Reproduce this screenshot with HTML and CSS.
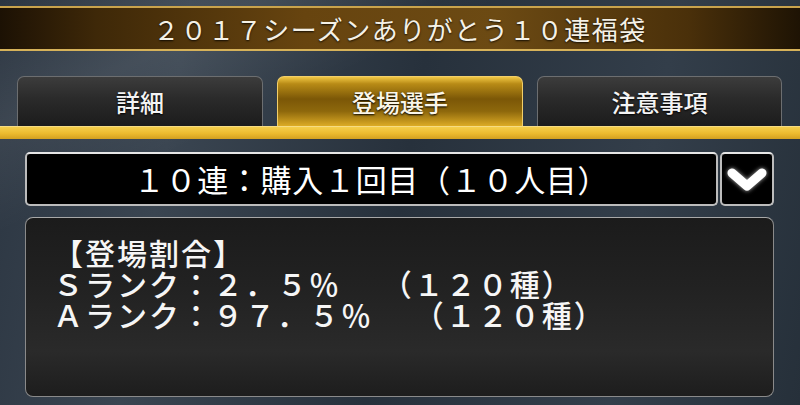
FILE: index.html
```html
<!DOCTYPE html>
<html lang="ja">
<head>
    <meta charset="UTF-8">
    <meta name="viewport" content="width=device-width, initial-scale=1.0">
    <title>2017シーズンありがとう10連福袋</title>
    <link rel="stylesheet" href="styles.css">
</head>
<body>
    <div class="screen">
        <div class="title-bar">２０１７シーズンありがとう１０連福袋</div>

        <div class="tabs">
            <div class="tab">詳細</div>
            <div class="tab active">登場選手</div>
            <div class="tab">注意事項</div>
        </div>
        <div class="tab-rule"></div>

        <div class="select-row">
            <div class="select-box">１０連：購入１回目（１０人目）</div>
            <div class="select-arrow">
                <svg width="50" height="50" viewBox="0 0 50 50">
                    <polyline points="10,19 25,32 40,19" fill="none" stroke="#fff" stroke-width="9" stroke-linecap="round" stroke-linejoin="round"/>
                </svg>
            </div>
        </div>

        <div class="info-box">
            <p>【登場割合】</p>
            <p>Ｓランク：２．５％　&nbsp;（１２０種）</p>
            <p>Ａランク：９７．５％　&nbsp;（１２０種）</p>
        </div>
    </div>
</body>
</html>
```

FILE: styles.css
```css
* {
    box-sizing: border-box;
    margin: 0;
    padding: 0;
}

body {
    width: 800px;
    height: 405px;
    overflow: hidden;
    font-family: "Noto Sans CJK JP", "Noto Sans", sans-serif;
    color: #fff;
    background:
        linear-gradient(155deg, rgba(255, 255, 255, 0) 0%, rgba(255, 255, 255, 0.07) 16%, rgba(255, 255, 255, 0) 30%),
        linear-gradient(100deg, #2c3642 0%, #3a4551 22%, #27313c 50%, #333e4a 78%, #26303a 100%);
}

.screen {
    padding-top: 6px;
}

.title-bar {
    height: 45px;
    border-top: 2px solid #c9a34c;
    border-bottom: 2px solid #d6b25a;
    background: linear-gradient(90deg, #1c1104 0%, #3e2808 12%, #67440f 38%, #6c4a13 62%, #4a300a 86%, #1e1304 100%);
    color: #f5f1e6;
    font-size: 26px;
    letter-spacing: 1.5px;
    line-height: 41px;
    text-align: center;
    text-shadow: 0 1px 2px rgba(0, 0, 0, 0.8);
}

.tabs {
    display: grid;
    grid-template-columns: 246px 246px 245px;
    gap: 14px;
    padding-left: 17px;
    margin-top: 25px;
}

.tab {
    height: 50px;
    border: 1px solid #6c6e70;
    border-bottom: none;
    border-radius: 7px 7px 0 0;
    background: linear-gradient(180deg, #3c3c3c 0%, #2a2a2a 45%, #1c1c1c 100%);
    color: #f4f4f4;
    font-size: 24px;
    font-weight: 500;
    line-height: 50px;
    text-align: center;
    text-shadow: 0 1px 2px #000;
}

.tab.active {
    border-color: #f2cf6a;
    background: linear-gradient(180deg, #f1c744 0%, #b88b16 14%, #7b5707 45%, #8e680c 70%, #dcab25 100%);
    color: #fbf6e8;
}

.tab-rule {
    height: 13px;
    border-top: 1px solid #f7dc82;
    background: linear-gradient(180deg, #f5cf4c 0%, #ecba2e 55%, #d3a020 100%);
}

.select-row {
    display: flex;
    gap: 2px;
    margin: 13px 26px 0 25px;
    height: 54px;
}

.select-box,
.select-arrow {
    background: #000;
    border: 2px solid #bcbcbc;
    border-top-color: #e6e6e6;
    border-radius: 5px;
}

.select-box {
    flex: 1;
    font-size: 31px;
    letter-spacing: 0.7px;
    line-height: 50px;
    text-align: center;
}

.select-arrow {
    width: 54px;
    display: flex;
    align-items: center;
    justify-content: center;
}

.select-arrow svg {
    filter: drop-shadow(0 0 2px rgba(255, 255, 255, 0.7));
}

.info-box {
    margin: 11px 26px 0 25px;
    height: 180px;
    border: 1px solid #8a8a8a;
    border-top-color: #a8a8a8;
    border-radius: 8px;
    background: linear-gradient(180deg, #1b1b1b 0%, #222 40%, #2a2a2a 75%, #1d1d1d 100%);
    padding: 19px 0 0 27px;
    font-size: 30px;
    font-weight: 500;
    letter-spacing: 2px;
    line-height: 31px;
    color: #f6f6f6;
}
```
